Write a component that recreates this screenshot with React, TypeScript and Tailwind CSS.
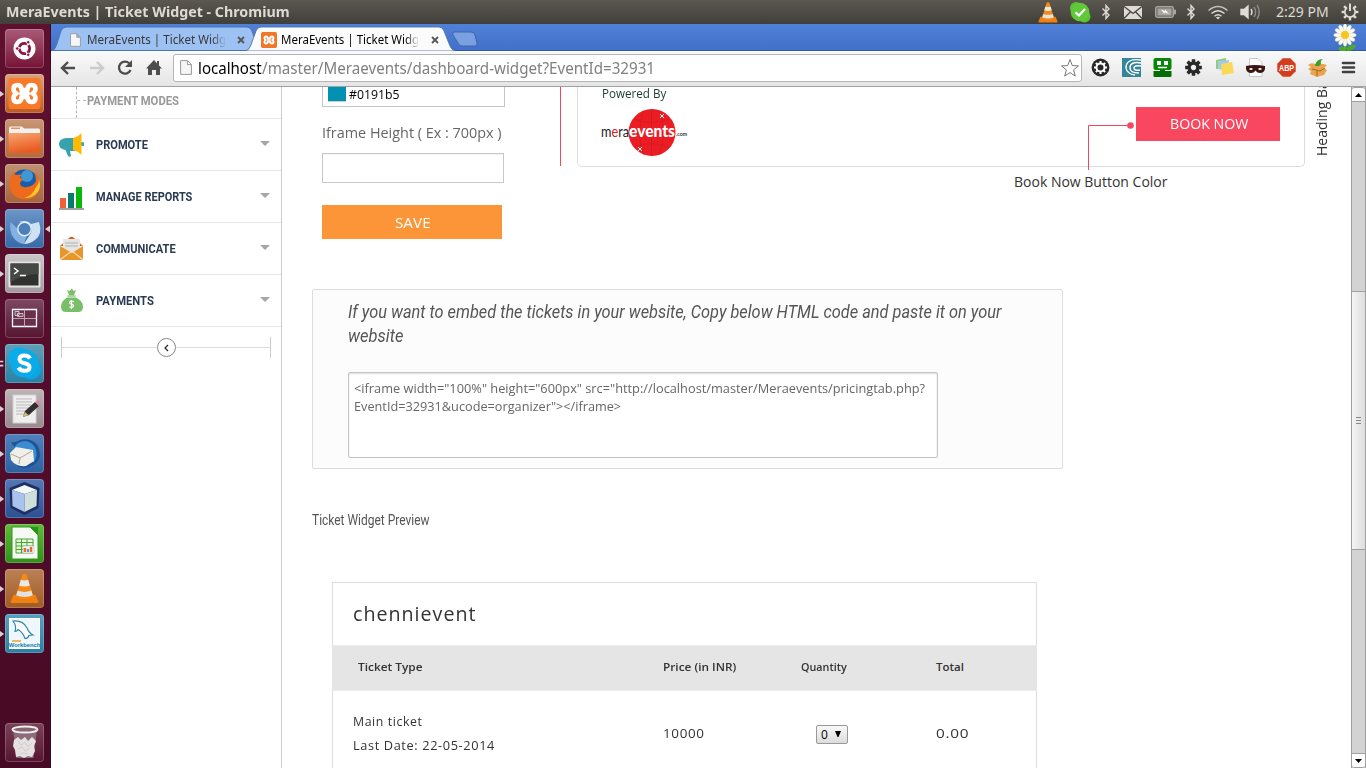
import { useLayoutEffect, useRef } from "react";
import type { ReactNode } from "react";

/* One line of text, condensed or widened to fill the width set by its class. */
function Fit({ children, className = "" }: { children: ReactNode; className?: string }) {
  const box = useRef<HTMLSpanElement>(null);
  const line = useRef<HTMLSpanElement>(null);
  useLayoutEffect(() => {
    if (box.current && line.current) {
      line.current.style.transform = `scaleX(${box.current.clientWidth / line.current.offsetWidth})`;
    }
  }, []);
  return (
    <span ref={box} className={"block shrink-0 " + className}>
      <span ref={line} className="inline-block origin-left whitespace-nowrap">{children}</span>
    </span>
  );
}

const ubuntu = "font-['Noto_Sans','Open_Sans',sans-serif]";
const roboto = "font-['Roboto',sans-serif]";

function Cone({ className }: { className: string }) {
  return (
    <svg viewBox="0 0 28 30" className={className}>
      <path d="M3.500 21h21l3 6.500q0 1.500-1.500 1.500H2q-1.500 0-1.500-1.500z" fill="#f08010" />
      <path d="M12 1.500q2-1.500 4 0L22.500 23q-8.500 4-17 0z" fill="#f58a17" />
      <path d="M10.500 6.500q3.500 1.500 7 0l1.700 5.500q-5.200 2-10.400 0z" fill="#e9e9e9" />
      <path d="M7.300 17q6.700 2.600 13.400 0l1.300 4.500q-8 3.500-16 0z" fill="#e2e2e2" />
    </svg>
  );
}

function Bluetooth() {
  return (
    <svg viewBox="0 0 10 16" className="h-4 w-2.5" fill="none" stroke="#dfdbd2" strokeWidth="1.400">
      <path d="M1.500 4.500 8 11 5 14.500V1.500L8 5l-6.500 6.500" />
    </svg>
  );
}

function Gear({ className, color }: { className: string; color: string }) {
  return (
    <svg viewBox="-10 -10 20 20" className={className}>
      {[0, 45, 90, 135, 180, 225, 270, 315].map((a) => (
        <rect key={a} x="-1.900" y="-8.800" width="3.800" height="5" rx=".6" fill={color} transform={`rotate(${a})`} />
      ))}
      <circle r="4.600" fill="none" stroke={color} strokeWidth="3.600" />
    </svg>
  );
}

function TitleBar() {
  return (
    <header className={"flex h-6 shrink-0 bg-linear-to-b from-[#5b5850] to-[#403f39] pl-[6px] text-[#dfdbd2] " + ubuntu}>
      <Fit className="w-[284px] text-[14px] leading-[24px] font-bold">MeraEvents | Ticket Widget - Chromium</Fit>
      <div className="ml-auto flex items-center">
        <Cone className="h-[23px] w-5" />
        <svg viewBox="0 0 22 22" className="ml-[11px] h-[22px] w-[22px]">
          <circle cx="7" cy="7" r="6" fill="#5bc236" />
          <circle cx="15.500" cy="15.500" r="6" fill="#5bc236" />
          <circle cx="11" cy="11" r="9.300" fill="#61c83a" />
          <path d="m6.500 11.300 3.500 3.200L16 8" fill="none" stroke="#fff" strokeWidth="2.300" />
        </svg>
        <div className="ml-[10px]"><Bluetooth /></div>
        <svg viewBox="0 0 18 13" className="ml-[13px] h-[13px] w-[18px]">
          <rect width="18" height="13" fill="#dfdbd2" />
          <path d="m0 .5 9 7 9-7M0 12.500l6.500-6.700M18 12.500l-6.500-6.700" fill="none" stroke="#45433d" strokeWidth="1.300" />
        </svg>
        <svg viewBox="0 0 21 12" className="ml-[13px] h-3 w-[21px]">
          <rect x=".6" y=".6" width="17.800" height="10.800" rx="1.800" fill="#77746d" stroke="#aaa79f" strokeWidth="1.200" />
          <rect x="19" y="3.500" width="2" height="5" rx=".8" fill="#aaa79f" />
          <rect x="2.600" y="2.600" width="13.800" height="6.800" fill="#aaa79f" />
          <path d="m6 3.500 4 1.700V3.500l4 4.500-4.500-1.700V8z" fill="#fff" />
        </svg>
        <div className="ml-[10px]"><Bluetooth /></div>
        <svg viewBox="0 0 22 15" className="ml-[11px] h-[15px] w-[22px]" fill="none" stroke="#dfdbd2" strokeWidth="1.400">
          <path d="M1.500 5.500q9.500-8 19 0" opacity=".8" /><path d="M4.500 8.500q6.500-5.500 13 0M7.500 11.200q3.500-3 7 0" />
          <path d="m11 14.500-2-2q2-1.600 4 0z" fill="#dfdbd2" stroke="none" />
        </svg>
        <svg viewBox="0 0 21 16" className="ml-[11px] h-4 w-[21px]" fill="none" stroke="#8f8c84" strokeWidth="1.400">
          <path d="M1 5.500h3L8 2v12L4 10.500H1z" fill="#dfdbd2" stroke="#dfdbd2" />
          <path d="M11 5q2 3 0 6" stroke="#dfdbd2" /><path d="M14 3q3.300 5 0 10M17 1q4.500 7 0 14" />
        </svg>
        <Fit className="ml-[15px] w-[53px] text-[14px] leading-[24px]">2:29 PM</Fit>
        <svg viewBox="-9 -9 18 18" className="mr-[7px] ml-3 h-[18px] w-[18px]">
          {[45, 90, 135, 180, 225, 270, 315].map((a) => (
            <rect key={a} x="-1.200" y="-8.400" width="2.400" height="3.400" fill="#dfdbd2" transform={`rotate(${a})`} />
          ))}
          <path d="M-3-4.300A5.200 5.200 0 1 0 3-4.300" fill="none" stroke="#dfdbd2" strokeWidth="1.700" />
          <path d="M0-8.500V-1" stroke="#dfdbd2" strokeWidth="2" />
        </svg>
      </div>
    </header>
  );
}

/* Mirrored pair of loops joined in the middle. */
function Knot({ color }: { color: string }) {
  return (
    <g fill="none" strokeLinejoin="round" strokeLinecap="round">
      <path d="M19.500 16h-3q0-5-4-5t-4 4q0 3 3 4.500-3 1.500-3 4.500 0 4 4 4t4-5h6q0 5 4 5t4-4q0-3-3-4.500 3-1.500 3-4.500 0-4-4-4t-4 5z" fill={color} stroke="#fff" strokeWidth="4.600" />
      <path d="M15 19.500h9" stroke="#fff" strokeWidth="3" />
    </g>
  );
}

const launchers: { tile: string; mark: string; icon: ReactNode }[] = [
  {
    tile: "from-[#a85a78] to-[#761037]", mark: "",
    icon: <><circle cx="19.500" cy="19.500" r="11" fill="#fff" /><circle cx="19.500" cy="19.500" r="5.200" fill="none" stroke="#8a1740" strokeWidth="2.800" strokeDasharray="9.400 1.490" strokeDashoffset="4.500" /><circle cx="12.200" cy="19.500" r="1.700" fill="#8a1740" stroke="#fff" strokeWidth=".8" /><circle cx="23.200" cy="13.200" r="1.700" fill="#8a1740" stroke="#fff" strokeWidth=".8" /><circle cx="23.200" cy="25.800" r="1.700" fill="#8a1740" stroke="#fff" strokeWidth=".8" /></>,
  },
  {
    tile: "from-[#d9a27d] to-[#bb5a1e]", mark: "one",
    icon: <><rect x="3.500" y="4" width="32" height="31" rx="3" fill="#f8792a" /><Knot color="#f8792a" /></>,
  },
  {
    tile: "from-[#c99674] to-[#b06c3e]", mark: "one",
    icon: <><path d="M4 9q0-1.500 1.500-1.500H17l2 2h14.500q1.500 0 1.500 1.500v7H4z" fill="#f3f1ef" /><path d="M6 9.300h9" stroke="#f08a60" strokeWidth="1.500" /><path d="M3.500 14h32L35 34H4z" fill="url(#folder)" /></>,
  },
  {
    tile: "from-[#c09170] to-[#a5653c]", mark: "one",
    icon: <><circle cx="19.500" cy="20" r="14.500" fill="#1a5da8" /><circle cx="22" cy="12" r="6" fill="#3f97d3" /><path d="M6 12q1-3 3-4 0 3 3 3 3-1 5 0-2 1-2 3 2 0 3 2-3 1-3 4 2 4 7 3 7-1 9-6 0-5-2-9 6 5 6 13-1 14-15 14.500Q5 34 4.500 20q0-5 1.500-8z" fill="#ee6a1c" /><path d="M31 23q3-3 3-8 3 10-3 15-5 4.500-11 4 8-3 11-11z" fill="#fcc62a" /></>,
  },
  {
    tile: "from-[#6c96c7] to-[#3769a8]", mark: "both",
    icon: <><path d="M5.500 13Q4 22 8 28q4 6 11 7l3-9q-6 0-8-5z" fill="#83b2e2" /><path d="M14 13q8-3 12 2l8-2q4 12-4 18-5 4-11 4l7-11q2-5-2-9z" fill="#cfe2f5" /><circle cx="19.500" cy="20" r="6.700" fill="#4d7fb9" stroke="#e0edfa" strokeWidth="1.400" /></>,
  },
  {
    tile: "from-[#cbc6c9] to-[#a29a9f]", mark: "one",
    icon: <><rect x="3.500" y="7.500" width="32" height="26" rx="1" fill="#e4e4e2" /><rect x="5.500" y="9.500" width="28" height="22" fill="#30322f" /><path d="M5.500 9.500h28V20q-14 0-28 8z" fill="#454844" /><path d="m9 14 4 3-4 3M15 21.500h6" fill="none" stroke="#fff" strokeWidth="1.500" /></>,
  },
  {
    tile: "from-[#7d4860] to-[#571432]", mark: "",
    icon: <><path d="M7.500 10.500h24v17h-24z" fill="#6a3049" stroke="#fff" strokeWidth="1.300" /><path d="M19.500 10.500v17M7.500 19.500h24" stroke="#bda5b0" /><path d="M10 12.500h4v4h-4zM12.500 14.500H18v3h-5.500z" fill="#7d4860" stroke="#ddd" strokeWidth=".8" /></>,
  },
  {
    tile: "from-[#5fa0b8] to-[#2981a3]", mark: "two",
    icon: <><circle cx="14" cy="14" r="10.500" fill="#08aee9" /><circle cx="25.500" cy="25" r="10.500" fill="#08a6e4" /><circle cx="19.500" cy="19.500" r="14" fill="#0aabe8" /><path d="M25 14.500Q23.500 11.500 19.500 11.500q-5 0-5 3.700 0 3 5 4t5 4q0 3.600-5 3.600-4.300 0-6-3.300" fill="none" stroke="#fff" strokeWidth="4" /></>,
  },
  {
    tile: "from-[#bdb4b6] to-[#978b8f]", mark: "one",
    icon: <><rect x="8" y="6" width="23" height="28" fill="#eee" stroke="#d0d0d0" /><path d="M11 10h16M11 13h16M11 16h15M11 19h13M11 22h11M11 25h10" stroke="#b9b9b9" /><path d="m18 28 2-6 10-9 4 4-10 9z" fill="#2f2f2b" /><path d="m30 13 2.200-1.500L36 15l-2 2z" fill="#dd81ac" /><path d="m18 28 2-5 3.500 3z" fill="#d8b574" /></>,
  },
  {
    tile: "from-[#5181bb] to-[#2b61a1]", mark: "one",
    icon: <><path d="M6 8q5 1 9-2 12-3 18 6 5 12-3 18-7 6-17 3l5-6z" fill="#1b5597" /><path d="M9 14q3-7 12-7 8 2 10 9 2 8-3 13 1-10-6-13-7-3-13-2z" fill="#3d8bd0" /><path d="m5 19 6-6 17 3 1 11-8 5q-10 1-15-6z" fill="#f1efe9" /><path d="m6 20 9 4 12-7M15 24l-1 6" fill="none" stroke="#aca899" /></>,
  },
  {
    tile: "from-[#5579b4] to-[#2c5093]", mark: "one",
    icon: <><path d="m19.500 3 15 6-1 20-14 7-14-7-1-20z" fill="#1e2f62" /><path d="m19.500 6 12.500 5-12.500 4L7 11z" fill="#f1f8f5" /><path d="m7 11 12.500 4v18L7.500 27z" fill="#a9c3ee" /><path d="M32 11 19.500 15v18l12-6z" fill="#cfdfdc" /></>,
  },
  {
    tile: "from-[#62b93c] to-[#30901a]", mark: "one",
    icon: <><path d="M7 3h18l8 8v24H7z" fill="#f7f9f5" stroke="#2f9a1c" /><path d="M25 3h8v8z" fill="#229713" /><path d="M11 15h17v14H11zM11 18.500h17M11 22h17M11 25.500h17M16.500 15v14M22 15v14" fill="#eaf8e4" stroke="#43aa29" /><rect x="18" y="22" width="11" height="7" fill="#f4f4f4" stroke="#bbb" strokeWidth=".6" /><path d="M20 28v-4M26 28v-5" stroke="#ee6b2a" strokeWidth="2.500" /><path d="M23 28v-3" stroke="#529ed2" strokeWidth="2" /></>,
  },
  { tile: "from-[#bb8154] to-[#a15a24]", mark: "one", icon: <svg x="5" y="4" width="29" height="31"><Cone className="h-[31px] w-[29px]" /></svg> },
  {
    tile: "from-[#599fc0] to-[#2b7fa5]", mark: "one",
    icon: <><rect x="4.500" y="4.500" width="30" height="30" fill="#eef8fc" stroke="#fff" /><path d="M8 7q10-1 14 7 2 5 6 7l-4 .5q-1 3-4 3-2-6-7-9-1 2-3 2 2-5-2-10.500z" fill="#fff" stroke="#2f87aa" strokeWidth="1.200" /><text x="19.500" y="33" textAnchor="middle" fontSize="5.800" fontWeight="bold" fill="#147aa5" fontFamily="Liberation Sans">Workbench</text><path d="M7 27h9" stroke="#eda436" strokeWidth="1.500" /></>,
  },
];

function Tile({ tile, mark, children }: { tile: string; mark: string; children: ReactNode }) {
  return (
    <div className="flex h-[39px] shrink-0 items-center">
      <svg viewBox="0 0 6 10" className="h-2.5 w-[5px]" fill="#d8cfd3">
        {(mark === "one" || mark === "both") && <path d="M0 1.500 5 5 0 8.500z" />}
        {mark === "two" && <path d="M0 1h4v2H0zM0 6h4v2H0z" />}
      </svg>
      <div className={"h-[39px] w-[39px] rounded-[4px] bg-linear-to-b shadow-[inset_0_0_0_1px_#ffffff33] " + tile}>
        <svg viewBox="0 0 39 39" className="h-[39px] w-[39px]">{children}</svg>
      </div>
      <svg viewBox="0 0 6 10" className="ml-auto h-2.5 w-1.5" fill="#d8cfd3">{mark === "both" && <path d="M6 1.500 1 5l5 3.500z" />}</svg>
    </div>
  );
}

function Launcher() {
  return (
    <nav className="flex w-[51px] shrink-0 flex-col gap-1.5 border-r border-[#3d0a20] bg-linear-to-b from-[#60102f] to-[#470a25] pt-[5px] pb-[6px]">
      <svg className="absolute h-0 w-0"><defs><linearGradient id="folder" x1="0" y1="0" x2=".3" y2="1"><stop stopColor="#f6a671" /><stop offset="1" stopColor="#ea5a23" /></linearGradient></defs></svg>
      {launchers.map((l, i) => <Tile key={i} tile={l.tile} mark={l.mark}>{l.icon}</Tile>)}
      <div className="mt-auto">
        <Tile tile="from-[#7a4259] to-[#561431]" mark="">
          <path d="M8 6.500h24L28.500 35h-17z" fill="#8c6c79" />
          <ellipse cx="20" cy="6.500" rx="12.500" ry="3" fill="#856572" stroke="#eee" strokeWidth="1.800" />
          <path d="m9 17 4-3 3 3 4-3 3 4 4-4 4 4-2 5 1 5-3 6-4-1-4 2-4-2-4 1-1-7-2-4z" fill="#e5e2e2" />
          <path d="m13 18 3 4 4-3 3 5 4-4M13 26l4-2 3 4 5-3M15 31l4-1 4 1" fill="none" stroke="#c9c0c3" strokeWidth=".7" />
        </Tile>
      </div>
    </nav>
  );
}

function Page({ className }: { className: string }) {
  return <svg viewBox="0 0 12 15" className={className}><path d="M.6.6h6.800l4 4v9.800H.6zM7.400.6v4h4" fill="#f6f6f6" stroke="#999" /></svg>;
}

function Close() {
  return <svg viewBox="0 0 8 8" className="h-2 w-2 shrink-0" stroke="#555" strokeWidth="1.800"><path d="m1 1 6 6M7 1 1 7" /></svg>;
}

function TabStrip() {
  return (
    <div className={"relative flex h-[27px] shrink-0 bg-linear-to-b from-[#5081d8] to-[#416fc9] text-[12px] leading-[26px] " + ubuntu}>
      <svg viewBox="0 0 1315 27" className="absolute inset-0 h-[27px] w-[1315px]">
        <path d="M0 26.500h1315" stroke="#315aa5" />
        <path d="M1 26.500Q4 26 5.500 21L10 7q1.500-4 5-4h181q3.500 0 5 4l5 14q1.500 5 4 5.500z" fill="#9dc1f3" stroke="#4b73b5" />
        <path d="M194 27q4-.5 5.500-5L205 7q1.500-4 5-4h178q3.500 0 5 4l6 15q2 4.500 5.500 5z" fill="#fbfbfb" stroke="#4d70ab" strokeWidth=".9" />
        <path d="M403 8h17q3 0 4 3l2 8q.5 3-2 3h-13q-3 0-4-3l-5-8q-1-3 1-3z" fill="#7ba0df" stroke="#3d66b1" />
      </svg>
      <div className="relative flex w-[198px] items-center pt-[5px] pl-[19px]">
        <Page className="h-[14px] w-[11px]" />
        <Fit className="ml-1.5 w-[139px] mask-r-from-90% text-[#383838]">MeraEvents | Ticket Widg</Fit>
        <div className="ml-[11px]"><Close /></div>
      </div>
      <div className="relative flex items-center pt-[5px] pl-[12px]">
        <svg viewBox="0 0 39 39" className="h-4 w-4"><rect width="39" height="39" rx="4" fill="#ef7727" /><Knot color="#ef7727" /></svg>
        <Fit className="ml-1 w-[138px] mask-r-from-90% text-black">MeraEvents | Ticket Widg</Fit>
        <div className="ml-3"><Close /></div>
      </div>
      <svg viewBox="-12 -12 24 27" className="relative mr-[9px] ml-auto h-[27px] w-6">
        <path d="M-1 4V15h3L1 4zM1 14Q5 6 11 10q-2 5-10 5zM1 14Q-2 8-7 12l2 3h6z" fill="#4eaa2a" />
        {[0, 30, 60, 90, 120, 150, 180, 210, 240, 270, 300, 330].map((a) => <ellipse key={a} cy="-7" rx="2" ry="4.300" fill="#fffdf3" stroke="#c9c5b0" strokeWidth=".4" transform={`translate(0 -1) rotate(${a})`} />)}
        <circle cy="-1" r="4" fill="#f8c51c" />
      </svg>
    </div>
  );
}

function Toolbar() {
  return (
    <div className="flex h-9 shrink-0 items-center border-b border-[#a0a09e] bg-linear-to-b from-[#fafafa] to-[#e5e5e5] pb-[2px] pl-[9px]">
      <svg viewBox="0 0 16 14" className="h-[14px] w-4" fill="none" stroke="#4d4d4d" strokeWidth="2.400"><path d="M15 7H2.500M8 1 2 7l6 6" /></svg>
      <svg viewBox="0 0 16 14" className="ml-[13px] h-[14px] w-4" fill="none" stroke="#cbcbcb" strokeWidth="2.400"><path d="M1 7h12.500M8 1l6 6-6 6" /></svg>
      <svg viewBox="0 0 16 16" className="ml-3 h-4 w-4"><path d="M12.200 3.300A6 6 0 1 0 13.500 10" fill="none" stroke="#4d4d4d" strokeWidth="2.300" /><path d="M15 0v7H8z" fill="#4d4d4d" /></svg>
      <svg viewBox="0 0 16 16" className="ml-[13px] h-4 w-4" fill="#4d4d4d"><path d="M8 0 0 8.500h2V15h4v-5h4v5h4V8.500h2l-3-3V1h-2v2.500z" /></svg>
      <div className={"ml-[11px] flex h-7 w-[909px] shrink-0 items-center rounded-[3px] border border-[#b5b5b5] bg-white pr-px pl-[6px] text-[16px] leading-[26px] " + ubuntu}>
        <Page className="h-[15px] w-3" />
        <Fit className="ml-[6px] w-16 text-black">localhost</Fit>
        <Fit className="w-[393px] text-[#808080]">/master/Meraevents/dashboard-widget?EventId=32931</Fit>
        <svg viewBox="0 0 20 20" className="ml-auto h-5 w-5"><path d="m10 1.500 2.300 6.100 6.200.3-4.900 4 1.700 6.200L10 14.600l-5.300 3.500 1.700-6.200-4.900-4 6.200-.3z" fill="none" stroke="#777" /></svg>
      </div>
      <div className="ml-[9px] flex items-center gap-3">
        <svg viewBox="-9.500 -9.500 19 19" className="h-[19px] w-[19px]"><circle r="8.900" fill="#282828" /><circle r="4" fill="none" stroke="#fff" strokeWidth="2" />{[0, 45, 90, 135, 180, 225, 270, 315].map((a) => <rect key={a} x="-1" y="-6.500" width="2" height="2.500" fill="#fff" transform={`rotate(${a})`} />)}</svg>
        <svg viewBox="0 0 19 19" className="h-[19px] w-[19px]"><path d="M0 0h19v19H0z" fill="#358499" /><path d="M19 2Q4 0 4 10q1 6 9 7M19 5Q8 3 8 10q0 5 9 5M19 8q-7-1-7 2 0 3 6 2" fill="none" stroke="#fff" strokeWidth="1.400" /></svg>
        <svg viewBox="0 0 19 19" className="h-[19px] w-[19px]"><rect x=".5" width="18" height="12" rx="2" fill="#078707" /><path d="M.5 13H7v-1h5v1h6.500v5q0 1-1 1h-16q-1 0-1-1z" fill="#056d05" /><path d="M4 3h4v4H4zM11 3h4v4h-4z" fill="#fff" /><path d="M5 9.500h9" stroke="#fff" strokeWidth="1.500" /></svg>
        <Gear className="h-[19px] w-[19px]" color="#292929" />
        <svg viewBox="0 0 19 19" className="h-[19px] w-[19px]"><path d="m1 2 10-2v10L1 11z" fill="#8fce70" /><path d="m3 3 11-1-1 11-10-2z" fill="#a2caec" /><path d="m6 6 11-2 2 11-12 2z" fill="#f9d957" /></svg>
        <svg viewBox="0 0 19 19" className="h-[19px] w-[19px]"><path d="M3.500.5H12l4 4v14H3.500z" fill="#fff" stroke="#c7c7c7" /><path d="M0 8q9-2 19 0v3q-1 4-5 4-3 0-4.500-2.500Q8 15 5 15 1 15 0 11z" fill="#3c1615" /><path d="M3 11q2-2 4 0-2 2-4 0zM12 11q2-2 4 0-2 2-4 0z" fill="#fff" /></svg>
        <svg viewBox="0 0 19 19" className="h-[19px] w-[19px]"><path d="M5.700.3h7.600l5.400 5.400v7.600l-5.400 5.400H5.700L.3 13.300V5.700z" fill="#d33d1e" /><text x="9.500" y="12.500" textAnchor="middle" fontFamily="Liberation Sans" fontWeight="bold" fontSize="8.500" textLength="15" lengthAdjust="spacingAndGlyphs" fill="#fff">ABP</text></svg>
        <svg viewBox="0 0 19 19" className="h-[19px] w-[19px]"><path d="M0 7q3-3 7-1 6-1 12 1l-3 3 3 2-3 5-7 2-7-3 1-3-3-2 3-2z" fill="#e8a44e" /><path d="m4 11 8 2 5-3M9 13v5" fill="none" stroke="#a66524" /><path d="M7 8Q8 1 15 1q-3 2-2 5l-2 2z" fill="#3d9d29" /></svg>
        <svg viewBox="0 0 19 19" className="h-[19px] w-[19px]"><path d="M4 5h11M4 9.500h11M4 14h11" stroke="#404040" strokeWidth="2.600" strokeLinecap="round" /></svg>
      </div>
    </div>
  );
}

const menu: { label: string; w: string; icon: ReactNode }[] = [
  { label: "PROMOTE", w: "w-[52px]", icon: <><path d="M7 6h9v13h-5l1 5q-1 1.500-3 0L6.500 18Q0 17 0 12t7-6z" fill="#36a2ad" /><circle cx="23.500" cy="12" r="2" fill="#36a2ad" /><path d="M14 6q5-1 8.500-5v22Q19 19 14 18z" fill="#ffb900" /></> },
  { label: "MANAGE REPORTS", w: "w-24", icon: <><path d="M1 14h6v10H1z" fill="#f16136" /><path d="M9 9h6v15H9z" fill="#087b71" /><path d="M17 3h6v21h-6z" fill="#08b90a" /><path d="M0 24h25v2H0z" fill="#a1a1a1" /></> },
  { label: "COMMUNICATE", w: "w-20", icon: <><path d="m1 10 9-8q2.500-2.500 5 0l9 8z" fill="#cf641d" /><path d="M4 3h17v14H4z" fill="#e5e5e5" /><path d="M6 7h13M6 10h13" stroke="#aaa" strokeWidth=".9" /><path d="m1 10 12 7 11-7v12q0 2-2 2H3q-2 0-2-2z" fill="#e7962a" /><path d="m2 23 11-8 10 8" fill="none" stroke="#fbe1b9" strokeWidth="1.100" /></> },
  { label: "PAYMENTS", w: "w-[58px]", icon: <><path d="m8 2 2.500 1L13 .5 14.500 3 17 2l-2 5h-5z" fill="#79bf6a" /><path d="M8 9.500Q2 13 2 19q0 5 5 5h12q5 0 5-5 0-6-7-9.500z" fill="#79bf6a" /><path d="M8.500 8h8" stroke="#79bf6a" strokeWidth="1.300" /><path d="M15 13.700q-4.500-1.700-4.500.8 0 1.300 2 1.700t2 1.800q-.5 2-4 .9M12.500 12v9" fill="none" stroke="#fff" strokeWidth="1.200" /></> },
];

function Sidebar() {
  return (
    <aside className={"flex w-[231px] shrink-0 flex-col border-r border-[#ccc] text-[13px] font-bold " + roboto}>
      <div className="flex h-8 shrink-0 border-b border-[#e6e6e6] pl-[25px] leading-[27px]">
        <div className="h-[31px] border-l border-dashed border-[#b8b8b8]" />
        <div className="mt-[13px] mr-px h-0 w-[9px] border-t border-dashed border-[#b8b8b8]" />
        <Fit className="w-[92px] text-[#999]">PAYMENT MODES</Fit>
      </div>
      {menu.map((m) => (
        <div key={m.label} className="flex h-[52px] shrink-0 items-center border-b border-[#e6e6e6] pr-[11px] pl-2">
          <svg viewBox="0 0 25 26" className="h-[26px] w-[25px]">{m.icon}</svg>
          <Fit className={"ml-3 leading-5 text-[#2b3a52] " + m.w}>{m.label}</Fit>
          <svg viewBox="0 0 10 5" className="mb-[3px] ml-auto h-[5px] w-2.5"><path d="M0 0h10L5 5z" fill="#a6a6a6" /></svg>
        </div>
      ))}
      <div className="mt-[10px] ml-[10px] flex h-[21px] w-[210px] items-center border-x border-[#ccc]">
        <div className="h-px flex-1 bg-[#ddd]" />
        <div className="flex h-[19px] w-[19px] items-center justify-center rounded-full border border-[#888]">
          <svg viewBox="0 0 5 8" className="h-2 w-[5px]" fill="none" stroke="#222" strokeWidth="1.200"><path d="M4 1 1 4l3 3" /></svg>
        </div>
        <div className="h-px flex-1 bg-[#ddd]" />
      </div>
    </aside>
  );
}

function WidgetForm() {
  return (
    <section className="flex h-[202px] shrink-0 items-start overflow-hidden pl-10">
      <div className="w-[183px] shrink-0 text-[14px] text-[#666]">
        <div className="flex h-5 border border-t-0 border-[#c5c5c5] pl-[5px]">
          <div className="h-[15px] w-[18px] border-b border-[#ccc] bg-[#0191b5]" />
          <Fit className="ml-[3px] w-[51px] text-[13px] leading-[14px] text-black">#0191b5</Fit>
        </div>
        <Fit className="mt-4 w-[180px] leading-5">Iframe Height ( Ex : 700px )</Fit>
        <div className="mt-[10px] h-[30px] w-[182px] border border-[#c8c8c8] shadow-[inset_0_1px_1px_#0000000d]" />
        <div className="mt-[22px] flex h-[34px] w-[180px] justify-center bg-[#fc9537] pl-px leading-[35px] text-white"><Fit className="w-9">SAVE</Fit></div>
      </div>
      <div className="ml-[55px] h-[79px] w-px shrink-0 bg-[#ef475c]" />
      <div className="ml-4 w-[728px] shrink-0">
        <div className="flex h-20 justify-between rounded-b-[5px] border border-t-0 border-[#ddd] pr-6 pl-6">
          <div>
            <Fit className="w-16 text-[12px] leading-[13px] text-[#173b31]">Powered By</Fit>
            <svg viewBox="0 0 88 50" className="mt-2 -ml-0.5 h-[50px] w-[88px]" fontFamily="Lato">
              <circle cx="52" cy="24.500" r="23.500" fill="#ec1c24" />
              <path d="M28 25h47M51.500 2v46M34 11q17 7 35 0M34 39q17-7 35 0M44 3q-9 22 0 44M59 3q9 22 0 44" stroke="#c91920" strokeWidth=".6" fill="none" />
              <text x="1" y="29" fontSize="15" textLength="28" lengthAdjust="spacingAndGlyphs" fill="#252525">m<tspan fill="#d22">e</tspan>ra</text>
              <text x="29" y="29" fontSize="16" fontWeight="900" textLength="46" lengthAdjust="spacingAndGlyphs" fill="#fff">events</text>
              <text x="76" y="28" fontSize="6" fontWeight="bold" textLength="11" lengthAdjust="spacingAndGlyphs" fill="#333">.com</text>
              <path d="m60 6 4 4m0-4-4 4m-22 29 4 4m0-4-4 4" stroke="#fff" />
            </svg>
          </div>
          <div className="mt-5 flex h-[34px] w-36 justify-center bg-[#f8475f] pl-px text-[14px] leading-[34px] text-white"><Fit className="w-[78px]">BOOK NOW</Fit></div>
        </div>
        <svg viewBox="0 0 48 50" className="-mt-[47px] ml-[510px] h-[50px] w-12"><path d="M1.500 50V5.500H43" fill="none" stroke="#ef475c" /><circle cx="43.500" cy="5.500" r="3.300" fill="#f8475f" /></svg>
        <Fit className="mt-0.5 ml-[437px] w-[154px] text-[14px] leading-[20px] text-[#333]">Book Now Button Color</Fit>
      </div>
      <div className="flex h-[69px] w-[33px] shrink-0 justify-center text-[14px] leading-[18px] text-[#333]">
        <span className="rotate-180 whitespace-nowrap [writing-mode:vertical-rl]">Heading Ba</span>
      </div>
    </section>
  );
}

function EmbedBox() {
  return (
    <section className="ml-[30px] h-[180px] w-[751px] shrink-0 rounded-[2px] border border-[#ddd] bg-[#fcfcfc] pt-[10px] pl-[35px]">
      <div className={"text-[18px] leading-6 text-[#555] italic " + roboto}>
        <Fit className="w-[653px]">If you want to embed the tickets in your website, Copy below HTML code and paste it on your</Fit>
        <Fit className="w-[55px]">website</Fit>
      </div>
      <div className="mt-6 h-[86px] w-[590px] rounded-[2px] border border-[#c4c4c4] bg-white pt-[6px] pl-[5px] text-[13px] leading-[18px] text-[#666] shadow-[inset_0_1px_2px_#00000022]">
        <Fit className="w-[571px]">{'<iframe width="100%" height="600px" src="http://localhost/master/Meraevents/pricingtab.php?'}</Fit>
        <Fit className="w-[267px]">{'EventId=32931&ucode=organizer"></iframe>'}</Fit>
      </div>
    </section>
  );
}

function TicketTable() {
  return (
    <section className="mt-[52px] ml-[50px] flex h-48 w-[705px] shrink-0 flex-col border border-[#ddd] text-[12.5px] text-[#333]">
      <div className="h-[62px] pt-4 pl-5 text-[20px] leading-[29px] tracking-[1px]"><Fit className="w-[124px]">chennievent</Fit></div>
      <div className="-mx-px grid h-[46px] grid-cols-[305px_138px_135px_1fr] border-y border-[#ebebeb] bg-[#e5e5e5] pl-[26px] text-[11.5px] leading-[42px] font-semibold">
        <Fit className="w-[65px]">Ticket Type</Fit><Fit className="w-[73px]">Price (in INR)</Fit><Fit className="w-[46px]">Quantity</Fit><Fit className="w-7">Total</Fit>
      </div>
      <div className="grid grid-cols-[310px_153px_120px_1fr] items-center pt-[19px] pl-5 leading-6 tracking-[0.6px]">
        <div><Fit className="w-[70px]">Main ticket</Fit><Fit className="w-[142px]">Last Date: 22-05-2014</Fit></div>
        <Fit className="w-[42px]">10000</Fit>
        <div className="flex h-[19px] w-8 items-center rounded-[2px] border border-[#999] bg-linear-to-b from-[#f8f8f8] to-[#ddd] pl-1 text-[12px] leading-[17px] tracking-normal text-black">
          <span className="w-3.5">0</span>
          <svg viewBox="0 0 6 6" className="h-1.5 w-1.5"><path d="M0 0h6L3.500 6h-1z" /></svg>
        </div>
        <Fit className="w-[33px]">0.00</Fit>
      </div>
    </section>
  );
}

function Scrollbar() {
  return (
    <div className="flex w-[15px] shrink-0 flex-col border-x border-[#a0a0a0] bg-[#d3d3d3]">
      <div className="flex h-[15px] items-center justify-center rounded-t-[3px] border-y border-[#a0a0a0] bg-white"><svg viewBox="0 0 7 4" className="h-1 w-[7px]"><path d="M3.500 0 7 4H0z" /></svg></div>
      <div className="h-[189px]" />
      <div className="flex h-[259px] flex-col items-center justify-center gap-0.5 border-y border-[#a0a0a0] bg-linear-to-r from-[#f4f4f4] to-[#dedede]">
        <i className="h-px w-[5px] bg-[#888]" /><i className="h-px w-[5px] bg-[#888]" /><i className="h-px w-[5px] bg-[#888]" />
      </div>
      <div className="mt-auto flex h-[15px] items-center justify-center rounded-b-[3px] border-y border-[#a0a0a0] bg-white"><svg viewBox="0 0 7 4" className="h-1 w-[7px]"><path d="M0 0h7L3.500 4z" /></svg></div>
    </div>
  );
}

export default function App() {
  return (
    <div className="flex h-[768px] w-[1366px] flex-col overflow-hidden bg-white font-['Open_Sans','Noto_Sans',sans-serif]">
      <TitleBar />
      <div className="flex min-h-0 flex-1">
        <Launcher />
        <div className="flex min-w-0 flex-1 flex-col">
          <TabStrip />
          <Toolbar />
          <div className="flex min-h-0 flex-1">
            <Sidebar />
            <main className="flex min-w-0 flex-1 flex-col overflow-hidden">
              <WidgetForm />
              <EmbedBox />
              <Fit className={"mt-[41px] ml-[30px] w-[118px] text-[14px] leading-5 text-[#555] " + roboto}>Ticket Widget Preview</Fit>
              <TicketTable />
            </main>
            <Scrollbar />
          </div>
        </div>
      </div>
    </div>
  );
}
